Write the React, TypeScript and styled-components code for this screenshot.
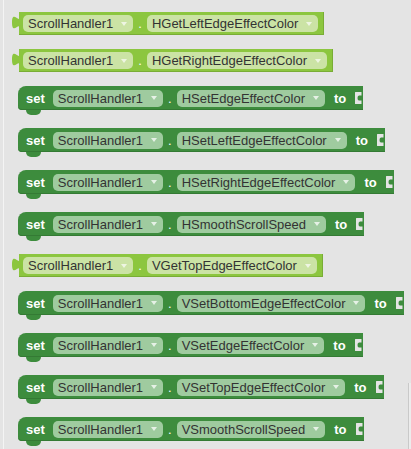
import React from "react";
import styled, { createGlobalStyle } from "styled-components";

const GlobalStyle = createGlobalStyle`
  body {
    margin: 0;
    background: #e4e4e4;
  }
`;

const Canvas = styled.div`
  position: relative;
  width: 411px;
  height: 449px;
  box-sizing: border-box;
  padding-left: 3px;
  background: #e4e4e4;
  overflow: hidden;
  font-family: "Liberation Sans", Arial, sans-serif;
`;

const Workspace = styled.div`
  height: 100%;
  box-sizing: border-box;
  border-left: 1px solid #f4f4f4;
  padding: 12px 0 0 14px;
  display: flex;
  flex-direction: column;
  align-items: flex-start;
`;

const Scrollbar = styled.div`
  position: absolute;
  right: 0;
  top: 383px;
  bottom: 0;
  width: 2px;
  border-left: 1px solid #c9c9c9;
  background: #ececec;
`;

const GetterBlock = styled.div`
  position: relative;
  flex-shrink: 0;
  display: inline-flex;
  align-items: center;
  height: 23px;
  box-sizing: border-box;
  margin: 0 0 14px 1px;
  padding: 0 6px 0 4px;
  background: #8cc63f;
  box-shadow: inset -1px -1px 0 #79ad35;
`;

const OutputTab = styled.svg`
  position: absolute;
  left: -7px;
  top: 3px;
`;

const SetterBlock = styled.div`
  position: relative;
  flex-shrink: 0;
  display: inline-flex;
  align-items: center;
  height: 24px;
  box-sizing: border-box;
  margin-bottom: 18px;
  padding-left: 8px;
  background: #3d8c3d;
  border-radius: 8px 0 0 4px;
  box-shadow: inset 0 -1px 0 #347a34;

  &::after {
    content: "";
    position: absolute;
    left: 8px;
    bottom: -5px;
    width: 15px;
    height: 5px;
    background: #3d8c3d;
    border-radius: 0 0 7px 7px;
  }
`;

const Keyword = styled.span<{ $gap: number }>`
  color: #ffffff;
  font-size: 13px;
  font-weight: bold;
  line-height: 17px;
  margin: 0 8px 0 ${(p) => p.$gap}px;
`;

const Field = styled.span<{ $tone: "light" | "dark" }>`
  display: inline-flex;
  align-items: center;
  height: 17px;
  padding: 0 6px 0 5px;
  border-radius: 5px;
  background: ${(p) => (p.$tone === "light" ? "#cbe3a5" : "#9fcb9f")};
  color: #333333;
  font-size: 13px;
  line-height: 17px;
  white-space: nowrap;
`;

const Arrow = styled.span<{ $tone: "light" | "dark" }>`
  width: 0;
  height: 0;
  margin-left: 8px;
  border-left: 3px solid transparent;
  border-right: 3px solid transparent;
  border-top: 4px solid ${(p) => (p.$tone === "light" ? "#eef5e2" : "#e6f1e6")};
`;

const Dot = styled.span`
  color: #ffffff;
  font-size: 13px;
  line-height: 17px;
  margin: 0 5px;
`;

const Socket = styled.svg`
  display: block;
`;

type Row = { kind: "get" | "set"; prop: string };

const rows: Row[] = [
  { kind: "get", prop: "HGetLeftEdgeEffectColor" },
  { kind: "get", prop: "HGetRightEdgeEffectColor" },
  { kind: "set", prop: "HSetEdgeEffectColor" },
  { kind: "set", prop: "HSetLeftEdgeEffectColor" },
  { kind: "set", prop: "HSetRightEdgeEffectColor" },
  { kind: "set", prop: "HSmoothScrollSpeed" },
  { kind: "get", prop: "VGetTopEdgeEffectColor" },
  { kind: "set", prop: "VSetBottomEdgeEffectColor" },
  { kind: "set", prop: "VSetEdgeEffectColor" },
  { kind: "set", prop: "VSetTopEdgeEffectColor" },
  { kind: "set", prop: "VSmoothScrollSpeed" },
];

function Dropdown({ text, tone }: { text: string; tone: "light" | "dark" }) {
  return (
    <Field $tone={tone}>
      {text}
      <Arrow $tone={tone} />
    </Field>
  );
}

function Getter({ prop }: { prop: string }) {
  return (
    <GetterBlock>
      <OutputTab width="8" height="17" viewBox="0 0 8 17">
        <path d="M8,1 c0,9 -8,-7 -8,6.5 s8,-2 8,6.5 z" fill="#8cc63f" />
      </OutputTab>
      <Dropdown text="ScrollHandler1" tone="light" />
      <Dot>.</Dot>
      <Dropdown text={prop} tone="light" />
    </GetterBlock>
  );
}

function Setter({ prop }: { prop: string }) {
  return (
    <SetterBlock>
      <Keyword $gap={0}>set</Keyword>
      <Dropdown text="ScrollHandler1" tone="dark" />
      <Dot>.</Dot>
      <Dropdown text={prop} tone="dark" />
      <Keyword $gap={9}>to</Keyword>
      <Socket width="9" height="24" viewBox="0 0 9 24">
        <path
          d="M1.5,6 H7.5 V9.5 H5 Q3.5,9.5 3.5,12 Q3.5,14.5 5,14.5 H7.5 V18 H1.5 Q1,18 1,17.5 V6.5 Q1,6 1.5,6 Z"
          fill="#e4e4e4"
        />
      </Socket>
    </SetterBlock>
  );
}

export default function App() {
  return (
    <>
      <GlobalStyle />
      <Canvas>
        <Workspace>
          {rows.map((r) =>
            r.kind === "get" ? <Getter key={r.prop} prop={r.prop} /> : <Setter key={r.prop} prop={r.prop} />
          )}
        </Workspace>
        <Scrollbar />
      </Canvas>
    </>
  );
}
